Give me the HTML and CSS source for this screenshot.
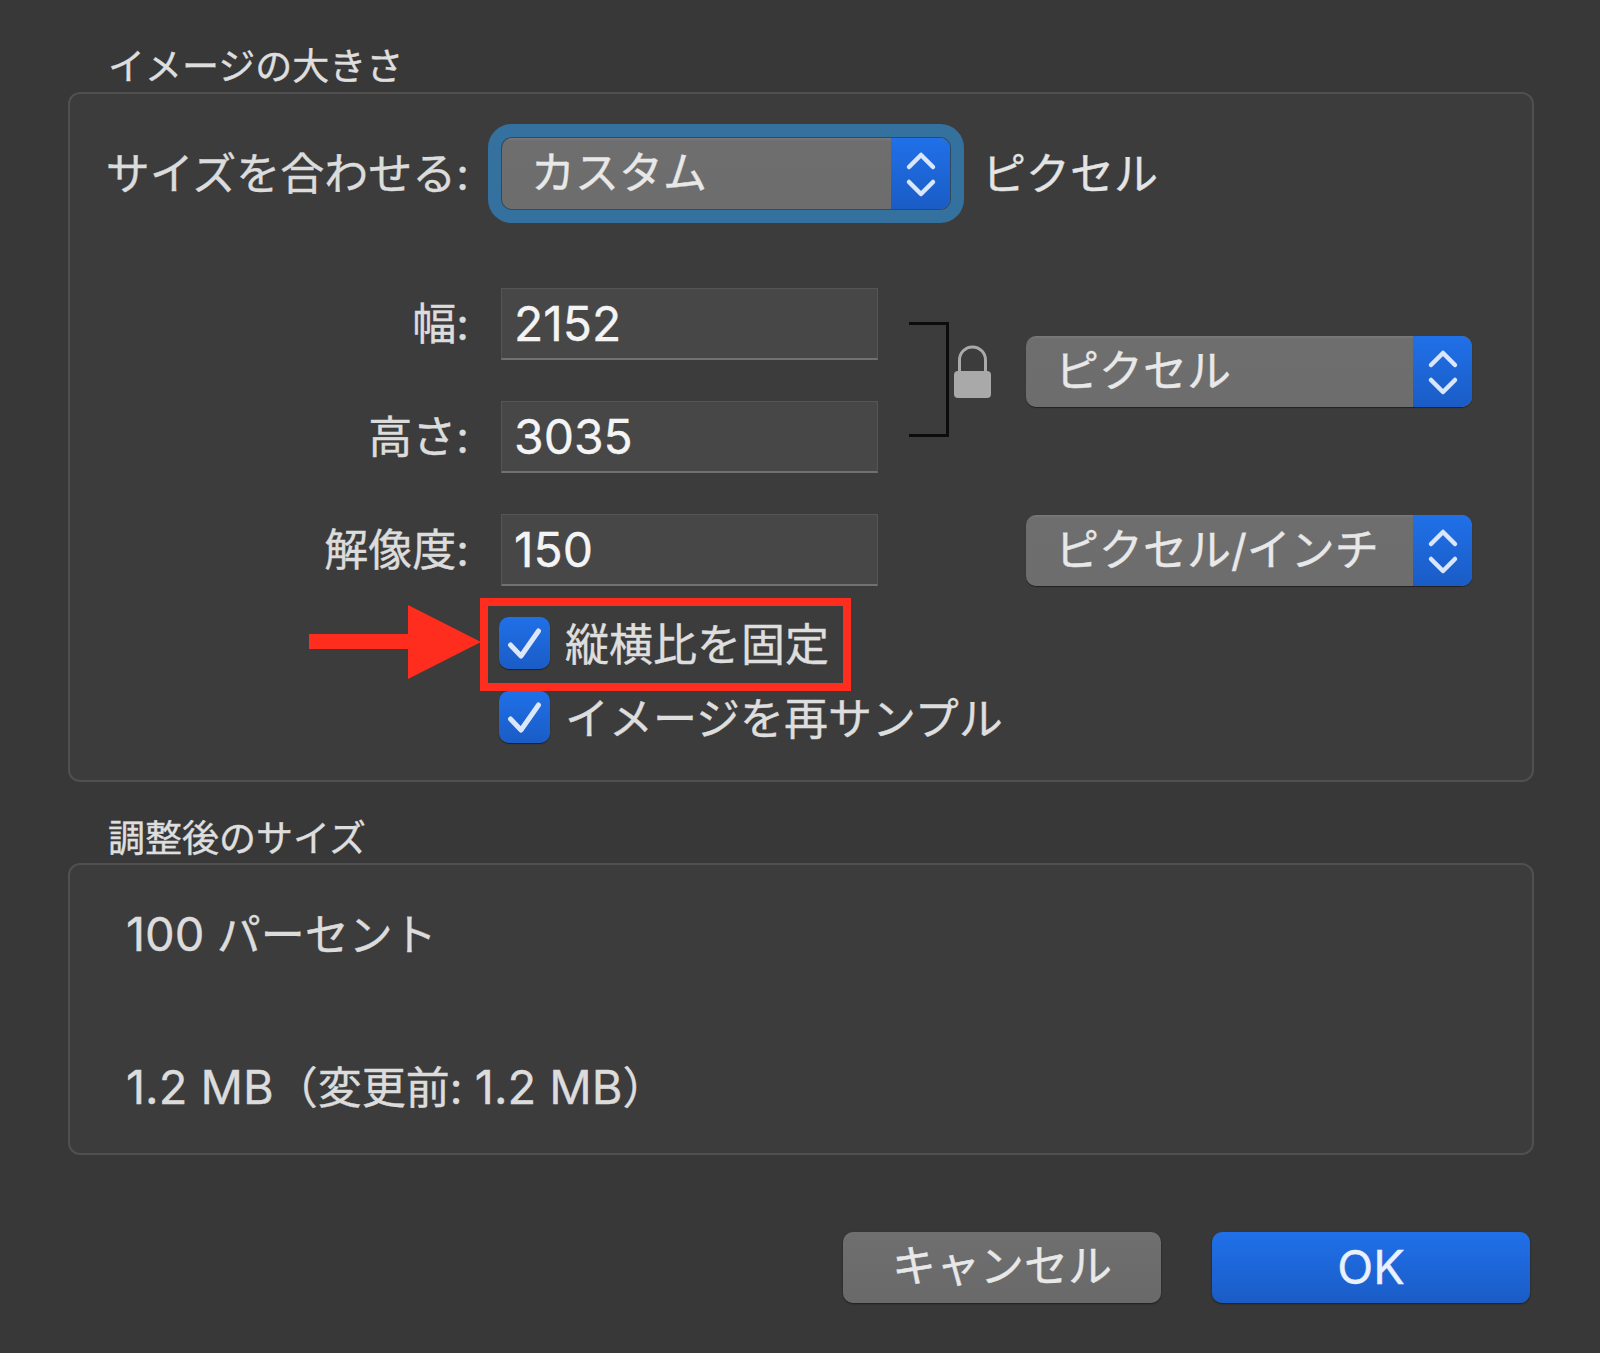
FILE: index.html
```html
<!DOCTYPE html>
<html lang="ja">
<head>
<meta charset="utf-8">
<title>イメージの大きさ</title>
<link rel="stylesheet" href="styles.css">
</head>
<body>
<main class="dialog">
  <h2 class="legend">イメージの大きさ</h2>
  <section class="panel panel-size">
    <div class="row row-fit">
      <span class="label">サイズを合わせる:</span>
      <div class="select select-focus">
        <span class="select-text">カスタム</span>
        <span class="stepper"><svg viewBox="0 0 59 71" class="chev"><path d="M18 29 30 17 42 29M18 44 30 56 42 44"/></svg></span>
      </div>
      <span class="unit">ピクセル</span>
    </div>
    <div class="linked">
      <div class="fields">
        <div class="row"><span class="label">幅:</span><div class="field">2152</div></div>
        <div class="row"><span class="label">高さ:</span><div class="field">3035</div></div>
      </div>
      <div class="bracket"></div>
      <svg class="lock" viewBox="0 0 37 53"><path class="shackle" d="M5.5 27V15a13 13 0 0 1 26 0v12"/><rect class="lock-body" x="0" y="26" width="37" height="27" rx="4"/></svg>
      <div class="select select-unit">
        <span class="select-text">ピクセル</span>
        <span class="stepper"><svg viewBox="0 0 59 71" class="chev"><path d="M18 29 30 17 42 29M18 44 30 56 42 44"/></svg></span>
      </div>
    </div>
    <div class="row row-res">
      <span class="label">解像度:</span><div class="field">150</div>
      <div class="select select-res">
        <span class="select-text">ピクセル/インチ</span>
        <span class="stepper"><svg viewBox="0 0 59 71" class="chev"><path d="M18 29 30 17 42 29M18 44 30 56 42 44"/></svg></span>
      </div>
    </div>
    <div class="check check-first">
      <svg class="arrow" viewBox="0 0 172 74"><path d="M0 29H99V0L172 37 99 74V44H0Z"/></svg>
      <div class="highlight"></div>
      <span class="box"><svg viewBox="0 0 51 52" class="tick"><path d="M11.5 28 22 39 39.5 14"/></svg></span>
      <span class="check-text">縦横比を固定</span>
    </div>
    <div class="check">
      <span class="box"><svg viewBox="0 0 51 52" class="tick"><path d="M11.5 28 22 39 39.5 14"/></svg></span>
      <span class="check-text">イメージを再サンプル</span>
    </div>
  </section>
  <h2 class="legend legend-second">調整後のサイズ</h2>
  <section class="panel panel-result">
    <p class="result"><span class="latin">100</span> パーセント</p>
    <p class="result"><span class="latin">1.2 MB</span>（変更前: <span class="latin">1.2 MB</span>）</p>
  </section>
  <footer class="actions">
    <button class="btn btn-cancel">キャンセル</button>
    <button class="btn btn-ok">OK</button>
  </footer>
</main>
</body>
</html>
```
FILE: styles.css
```css
* { box-sizing: border-box; }
html, body { margin: 0; height: 100%; }
body {
  background: #383838;
  color: #e4e4e4;
  font-family: Inter, "Noto Sans CJK JP", sans-serif;
  font-size: 44px;
  -webkit-text-stroke: 0.4px currentColor;
}
.dialog { width: 1600px; height: 1353px; padding: 40px 66px 0 68px; overflow: hidden; }
.legend {
  margin: 0;
  padding-left: 40px;
  height: 52px;
  line-height: 54px;
  font-size: 37px;
  font-weight: 400;
  color: #dedede;
}
.legend-second { margin-top: 29px; line-height: 56px; }
.panel {
  background: #3c3c3c;
  border: 2px solid #505050;
  border-radius: 12px;
}
.panel-size { height: 690px; padding-top: 44px; }
.panel-result { height: 292px; padding: 41px 0 0 56px; }
.row { display: flex; align-items: center; }
.label { width: 399px; margin-right: 32px; text-align: right; flex: none; color: #dcdcdc; line-height: 1; white-space: nowrap; }
.row-fit { height: 71px; }
.select {
  display: flex;
  height: 71px;
  border-radius: 10px;
  background: linear-gradient(#7a7a7a 0, #6e6e6e 3px, #6d6d6d);
  box-shadow: 0 1px 1px rgba(0,0,0,.45);
  overflow: hidden;
  flex: none;
}
.select-focus {
  width: 448px;
  overflow: visible;
  margin-left: 1px;
  box-shadow: 0 0 0 1px #2f4a60, 0 0 0 14px #34719e;
  border-radius: 10px;
}
.select-text { flex: 1; padding-left: 29px; line-height: 71px; white-space: nowrap; color: #e8e8e8; }
.stepper {
  width: 59px;
  flex: none;
  background: linear-gradient(#2070e8, #1a5cc6);
  border-radius: 0 10px 10px 0;
}
.select .stepper { height: 100%; }
.chev { display: block; width: 59px; height: 71px; fill: none; stroke: #d9e6fb; stroke-width: 4.5; stroke-linecap: round; stroke-linejoin: round; }
.unit { margin-left: 32px; line-height: 1; color: #e4e4e4; }
.linked { display: flex; align-items: flex-start; margin-top: 79px; }
.fields { display: flex; flex-direction: column; gap: 41px; }
.field {
  width: 377px;
  height: 72px;
  flex: none;
  padding-left: 12px;
  line-height: 70px;
  color: #f4f4f4;
  font-size: 48px;
  font-weight: 400;
  background: #474747;
  border: 1px solid #555;
  border-bottom: 2px solid #717171;
}
.bracket {
  width: 40px;
  height: 115px;
  margin: 34px 0 0 31px;
  border: 3px solid #0c0c0c;
  border-left: 0;
  flex: none;
}
.lock { width: 37px; height: 53px; margin: 57px 0 0 5px; flex: none; }
.shackle { fill: none; stroke: #aaa; stroke-width: 3; }
.lock-body { fill: #a9a9a9; }
.select-unit { width: 446px; margin: 48px 0 0 35px; }
.select-res { width: 446px; margin-left: 148px; }
.row-res { margin-top: 41px; }
.check {
  position: relative;
  display: flex;
  align-items: center;
  gap: 15px;
  height: 52px;
  margin: 22px 0 0 429px;
}
.check-first { margin-top: 31px; }
.box {
  width: 51px;
  height: 52px;
  flex: none;
  border-radius: 10px;
  background: linear-gradient(#2070e8, #1a5cc6);
  box-shadow: 0 1px 1px rgba(0,0,0,.5);
}
.tick { display: block; width: 51px; height: 52px; fill: none; stroke: #dbe7fb; stroke-width: 5; stroke-linecap: round; stroke-linejoin: round; }
.check-text { padding-top: 4px; line-height: 56px; white-space: nowrap; color: #dedede; }
.highlight {
  position: absolute;
  left: -19px;
  top: -19px;
  width: 371px;
  height: 93px;
  border: 8px solid #ff2d1e;
}
.arrow { position: absolute; left: -190px; top: -12px; width: 172px; height: 74px; fill: #ff2d1e; }
.result { margin: 0; height: 56px; line-height: 56px; color: #dcdcdc; white-space: nowrap; }
.result + .result { margin-top: 97px; }
.latin { font-size: 47px; }
.actions { display: flex; justify-content: flex-end; gap: 51px; margin-top: 77px; padding-right: 4px; }
.btn {
  width: 318px;
  height: 71px;
  padding: 0 0 3px;
  border: 0;
  border-radius: 10px;
  font: inherit;
  line-height: 1;
  box-shadow: 0 1px 2px rgba(0,0,0,.5);
}
.btn-cancel { background: linear-gradient(#6f6f6f, #696969); color: #e8e8e8; }
.btn-ok { background: linear-gradient(#2070e8 0, #1d66d8 50%, #1a5cc6); color: #eaf1fd; font-size: 47px; }
```
